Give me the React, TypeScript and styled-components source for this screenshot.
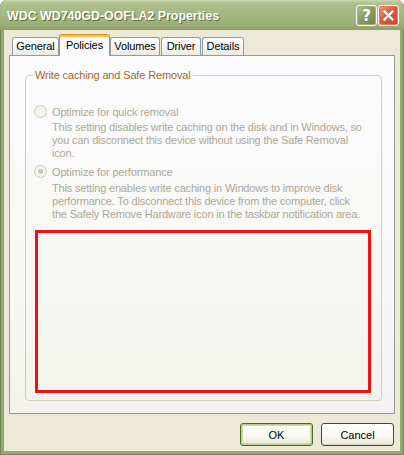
import React from "react";
import styled, { createGlobalStyle } from "styled-components";

const Global = createGlobalStyle`
  html, body { margin: 0; padding: 0; background: #ffffff; }
  body { font-family: "Liberation Sans", Arial, sans-serif; }
  * { box-sizing: border-box; }
`;

const Window = styled.div`
  width: 404px;
  height: 455px;
  display: flex;
  flex-direction: column;
  background: #94a970;
  border-radius: 7px 7px 0 0;
  overflow: hidden;
  box-shadow: inset 1px 0 0 #71875a, inset -1px 0 0 #71875a, inset 0 -1px 0 #71875a;
`;

const TitleBar = styled.div`
  height: 30px;
  flex: none;
  display: flex;
  align-items: flex-start;
  justify-content: space-between;
  padding: 0 5px 0 7px;
  background: linear-gradient(
    to bottom,
    #cdd8ae 0px,
    #b7c697 2px,
    #abbb89 6px,
    #a4b581 18px,
    #99ac74 26px,
    #8b9f66 30px
  );
`;

const Title = styled.div`
  margin-top: 9px;
  font-family: "Liberation Sans", Arial, sans-serif;
  font-weight: bold;
  font-size: 12.4px;
  line-height: 15px;
  color: #ffffff;
  text-shadow: 1px 1px 0 #5f6e42;
  white-space: nowrap;
`;

const CaptionButtons = styled.div`
  display: flex;
  gap: 1px;
  margin-top: 5px;
`;

const CaptionButton = styled.div<{ $kind: "help" | "close" }>`
  width: 21px;
  height: 21px;
  border: 1px solid #ffffff;
  border-radius: 3px;
  display: flex;
  align-items: center;
  justify-content: center;
  color: #ffffff;
  font-family: "DejaVu Sans", sans-serif;
  font-weight: bold;
  font-size: 15px;
  background: ${(p) =>
    p.$kind === "help"
      ? "linear-gradient(135deg, #b3c28f 0%, #8b9d62 45%, #6f8248 100%)"
      : "linear-gradient(135deg, #f0a080 0%, #d9603c 45%, #c1432a 100%)"};
  box-shadow: inset 0 0 0 1px ${(p) => (p.$kind === "help" ? "#9fb07a" : "#e07a5a")};
`;

const Body = styled.div`
  flex: 1;
  margin: 0 4px 4px 4px;
  background: #ece9d8;
  padding: 4px 5px 0 5px;
  display: flex;
  flex-direction: column;
`;

const TabRow = styled.div`
  height: 21px;
  display: flex;
  align-items: flex-end;
  padding-left: 3px;
`;

const Tab = styled.div<{ $active?: boolean; $w: number }>`
  width: ${(p) => p.$w}px;
  height: ${(p) => (p.$active ? 22 : 18)}px;
  margin-bottom: ${(p) => (p.$active ? -1 : 0)}px;
  margin-left: ${(p) => (p.$active ? -1 : 0)}px;
  margin-right: ${(p) => (p.$active ? 0 : 1)}px;
  position: relative;
  z-index: ${(p) => (p.$active ? 2 : 0)};
  border: 1px solid #919b9c;
  border-bottom: none;
  border-top-color: ${(p) => (p.$active ? "#e68b2c" : "#919b9c")};
  border-radius: 3px 3px 0 0;
  display: flex;
  justify-content: center;
  padding-top: ${(p) => (p.$active ? 4 : 2)}px;
  font-size: 11px;
  line-height: 13px;
  letter-spacing: -0.1px;
  color: #000000;
  white-space: nowrap;
  background: ${(p) =>
    p.$active
      ? "#fcfcfe"
      : "linear-gradient(to bottom, #ffffff 0%, #f7f7f4 50%, #ebeae3 100%)"};
  box-shadow: ${(p) => (p.$active ? "inset 0 2px 0 #ffc83c" : "none")};
`;

const Panel = styled.div`
  height: 359px;
  border: 1px solid #919b9c;
  background: linear-gradient(to bottom, #fcfcfe 0%, #f7f7f4 60%, #f3f2ec 100%);
  padding: 12px 12px 0 15px;
`;

const Group = styled.fieldset`
  margin: 0;
  width: 357px;
  border: 1px solid #d0d0bf;
  border-radius: 4px;
  padding: 0 8px 7px 8px;
`;

const Legend = styled.legend`
  margin-left: -1px;
  padding: 0 2px;
  font-size: 11px;
  line-height: 14px;
  letter-spacing: -0.15px;
  color: #a5652a;
`;

const Options = styled.div`
  padding-top: 23px;
  display: flex;
  flex-direction: column;
`;

const RadioRow = styled.div<{ $gap: number }>`
  margin-top: ${(p) => p.$gap}px;
  height: 13px;
  display: flex;
  align-items: center;
  gap: 5px;
  font-size: 11px;
  letter-spacing: -0.15px;
  color: #aca899;
  white-space: nowrap;
`;

const Radio = styled.span<{ $checked?: boolean }>`
  width: 13px;
  height: 13px;
  border-radius: 50%;
  border: 1px solid #cac8bb;
  background: #f5f4ef;
  display: flex;
  align-items: center;
  justify-content: center;
  flex: none;
  &::after {
    content: "";
    width: 5px;
    height: 5px;
    border-radius: 50%;
    background: ${(p) => (p.$checked ? "#c8c6b8" : "transparent")};
  }
`;

const Desc = styled.div<{ $gap: number }>`
  margin-top: ${(p) => p.$gap}px;
  padding-left: 18px;
  font-size: 11px;
  line-height: 13px;
  letter-spacing: -0.18px;
  color: #aca899;
`;

const Line = styled.div`
  white-space: nowrap;
`;

const Highlight = styled.div`
  margin: 9px 0 0 1px;
  width: 336px;
  height: 163px;
  border: 3px solid #ee1313;
`;

const Footer = styled.div`
  margin-top: 9px;
  display: flex;
  justify-content: flex-end;
  gap: 8px;
  padding-right: 1px;
`;

const Button = styled.div<{ $default?: boolean }>`
  width: 73px;
  height: 23px;
  border: 1px solid ${(p) => (p.$default ? "#4a6a2a" : "#3f4a2e")};
  border-radius: 3px;
  display: flex;
  align-items: center;
  justify-content: center;
  font-size: 11px;
  color: #000000;
  background: linear-gradient(to bottom, #ffffff 0%, #f8f7f0 60%, #e8e5d6 100%);
  box-shadow: ${(p) =>
    p.$default
      ? "inset 0 0 0 1px #b9cd8c, inset 0 0 0 2px #cfdcab"
      : "inset 0 -1px 0 #d6d0c0"};
`;

export default function App() {
  return (
    <>
      <Global />
      <Window>
        <TitleBar>
          <Title>WDC WD740GD-OOFLA2 Properties</Title>
          <CaptionButtons>
            <CaptionButton $kind="help">?</CaptionButton>
            <CaptionButton $kind="close">
              <svg width="11" height="11" viewBox="0 0 11 11">
                <path d="M1.5 1.5 L9.5 9.5 M9.5 1.5 L1.5 9.5" stroke="#ffffff" strokeWidth="2.2" strokeLinecap="square" />
              </svg>
            </CaptionButton>
          </CaptionButtons>
        </TitleBar>
        <Body>
          <TabRow>
            <Tab $w={47}>General</Tab>
            <Tab $w={51} $active>Policies</Tab>
            <Tab $w={50}>Volumes</Tab>
            <Tab $w={40}>Driver</Tab>
            <Tab $w={42}>Details</Tab>
          </TabRow>
          <Panel>
            <Group>
              <Legend>Write caching and Safe Removal</Legend>
              <Options>
                <RadioRow $gap={0}>
                  <Radio />
                  Optimize for quick removal
                </RadioRow>
                <Desc $gap={3}>
                  <Line>This setting disables write caching on the disk and in Windows, so</Line>
                  <Line>you can disconnect this device without using the Safe Removal</Line>
                  <Line>icon.</Line>
                </Desc>
                <RadioRow $gap={5}>
                  <Radio $checked />
                  Optimize for performance
                </RadioRow>
                <Desc $gap={4}>
                  <Line>This setting enables write caching in Windows to improve disk</Line>
                  <Line>performance. To disconnect this device from the computer, click</Line>
                  <Line>the Safely Remove Hardware icon in the taskbar notification area.</Line>
                </Desc>
                <Highlight />
              </Options>
            </Group>
          </Panel>
          <Footer>
            <Button $default>OK</Button>
            <Button>Cancel</Button>
          </Footer>
        </Body>
      </Window>
    </>
  );
}
